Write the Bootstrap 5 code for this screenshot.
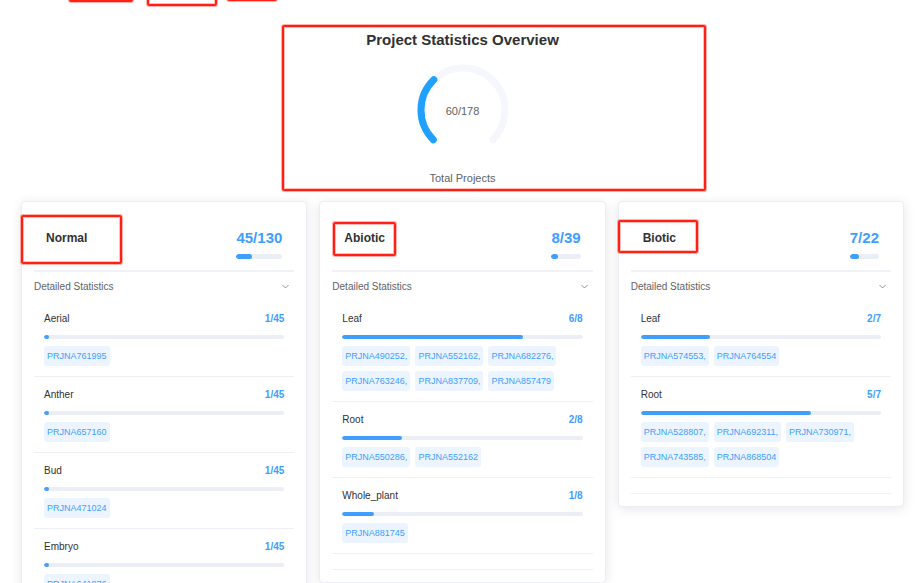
<!DOCTYPE html>
<html lang="en">
<head>
<meta charset="utf-8">
<meta name="viewport" content="width=device-width, initial-scale=1">
<title>Project Statistics Overview</title>
<link href="https://cdn.jsdelivr.net/npm/bootstrap@5.3.0/dist/css/bootstrap.min.css" rel="stylesheet">
<style>
  body { font-family: "Liberation Sans", Arial, sans-serif; font-size: 10px; line-height: 20px; color: #303133; background: #fff; }
  .stats-page { padding: 0 11px 20px 21px; }
  .overview { padding-top: 28px; padding-bottom: 13px; }
  .overview h1 { font-size: 15px; line-height: 24px; color: #303133; }
  .overview-caption, .gauge-value { font-size: 11px; color: #606266; }
  .gauge-value { padding-top: 2px; }
  .gauge { margin-top: 10px; margin-bottom: 10px; }
  .gauge svg { width: 96px; height: 96px; }
  .stats-grid { --bs-gutter-x: 12px; }
  .stat-card { border: 1px solid #ebeef5; border-radius: 4px; box-shadow: 0 2px 12px rgba(0, 0, 0, .1); padding: 0 12px 12px; }
  .stat-head { height: 70px; padding: 4px 12px 0; border-bottom: 2px solid #f0f2f8; }
  .stat-head h2 { font-size: 12px; line-height: 20px; }
  .stat-total { font-size: 15px; color: #409eff; margin-top: 10px; }
  .progress { --bs-progress-height: 4px; --bs-progress-bg: #ebeef5; --bs-progress-bar-bg: #409eff; --bs-progress-border-radius: 4px; }
  .progress-bar { border-radius: 4px; }
  .stat-total-bar { --bs-progress-height: 5px; margin-top: 6px; }
  .detail-toggle { color: #606266; height: 29px; padding: 0 4px 0 0; font-size: 10px; }
  .detail-toggle svg { width: 9px; height: 9px; }
  .tissue { padding: 8px 10px 10px; border-bottom: 1px solid #eef0f5; }
  .tissue h3 { font-size: 10px; line-height: 20px; }
  .tissue-count { color: #409eff; }
  .tissue .progress { margin: 6px 0 7px; }
  .tag-list { gap: 5px; }
  .tag { color: #409eff; background: #ecf5ff; font-size: 9px; border-radius: 3px; padding: 0 3px; }
  .detail-end { height: 16px; border-bottom: 1px solid #eef0f5; }
  .callout { position: absolute; border: 2px solid #ff2014; border-radius: 2px; box-shadow: 0 0 0 1px rgba(255, 32, 20, .35), inset 0 0 0 1px rgba(255, 32, 20, .3); pointer-events: none; }
  .callout-tab-a { left: 69px; top: -6px; width: 64px; height: 8px; background: #ff2014; }
  .callout-tab-b { left: 147px; top: -20px; width: 70px; height: 26px; }
  .callout-tab-c { left: 227px; top: -20px; width: 50px; height: 21px; }
  .callout-overview { left: 261px; top: 25px; width: 424px; height: 166px; }
  .callout-normal { left: -25px; top: -13px; width: 101px; height: 49px; }
  .callout-abiotic { left: -11px; top: -6px; width: 63px; height: 34px; }
  .callout-biotic { left: -25px; top: -8px; width: 80px; height: 33px; }
</style>
<script src="https://cdn.jsdelivr.net/npm/bootstrap@5.3.0/dist/js/bootstrap.bundle.min.js"></script>
</head>
<body>
<div class="callout callout-tab-a"></div>
<div class="callout callout-tab-b"></div>
<div class="callout callout-tab-c"></div>
<main class="stats-page">
  <section class="overview position-relative text-center">
    <h1 class="fw-bold mb-0">Project Statistics Overview</h1>
    <div class="gauge d-grid justify-content-center">
      <div class="position-relative">
        <svg class="d-block" viewBox="0 0 96 96" fill="none" stroke-width="7" stroke-linecap="round" aria-hidden="true">
          <path d="M18.3 77.7A42 42 0 1 1 77.7 77.7" stroke="#f5f7fc"/>
          <path d="M18.3 77.7A42 42 0 0 1 18.8 17.8" stroke="#20a0ff"/>
        </svg>
        <span class="gauge-value position-absolute top-50 start-50 translate-middle">60/178</span>
      </div>
    </div>
    <div class="overview-caption">Total Projects</div>
    <div class="callout callout-overview"></div>
  </section>

  <div class="row row-cols-3 align-items-start stats-grid">
    <div class="col">
      <section class="card stat-card">
        <header class="stat-head d-flex justify-content-between align-items-center">
          <h2 class="fw-bold mb-0 position-relative">Normal<span class="callout callout-normal"></span></h2>
          <div>
            <div class="stat-total fw-bold">45/130</div>
            <div class="progress stat-total-bar"><div class="progress-bar" style="width:35%"></div></div>
          </div>
        </header>
        <button class="btn border-0 detail-toggle d-flex justify-content-between align-items-center" type="button" data-bs-toggle="collapse" data-bs-target="#normal-details" aria-expanded="true" aria-controls="normal-details">Detailed Statistics
          <svg viewBox="0 0 9 9" fill="none" stroke="#909399" aria-hidden="true"><path d="M1.5 3L4.5 6L7.5 3"/></svg></button>
        <div class="collapse show" id="normal-details">
          <div class="tissue">
            <div class="d-flex justify-content-between"><h3 class="fw-normal mb-0">Aerial</h3><span class="tissue-count fw-bold">1/45</span></div>
            <div class="progress"><div class="progress-bar" style="width:2%"></div></div>
            <div class="tag-list d-flex flex-wrap"><span class="tag">PRJNA761995</span></div>
          </div>
          <div class="tissue">
            <div class="d-flex justify-content-between"><h3 class="fw-normal mb-0">Anther</h3><span class="tissue-count fw-bold">1/45</span></div>
            <div class="progress"><div class="progress-bar" style="width:2%"></div></div>
            <div class="tag-list d-flex flex-wrap"><span class="tag">PRJNA657160</span></div>
          </div>
          <div class="tissue">
            <div class="d-flex justify-content-between"><h3 class="fw-normal mb-0">Bud</h3><span class="tissue-count fw-bold">1/45</span></div>
            <div class="progress"><div class="progress-bar" style="width:2%"></div></div>
            <div class="tag-list d-flex flex-wrap"><span class="tag">PRJNA471024</span></div>
          </div>
          <div class="tissue">
            <div class="d-flex justify-content-between"><h3 class="fw-normal mb-0">Embryo</h3><span class="tissue-count fw-bold">1/45</span></div>
            <div class="progress"><div class="progress-bar" style="width:2%"></div></div>
            <div class="tag-list d-flex flex-wrap"><span class="tag">PRJNA641876</span></div>
          </div>
          <div class="detail-end"></div>
        </div>
      </section>
    </div>

    <div class="col">
      <section class="card stat-card">
        <header class="stat-head d-flex justify-content-between align-items-center">
          <h2 class="fw-bold mb-0 position-relative">Abiotic<span class="callout callout-abiotic"></span></h2>
          <div>
            <div class="stat-total fw-bold">8/39</div>
            <div class="progress stat-total-bar"><div class="progress-bar" style="width:21%"></div></div>
          </div>
        </header>
        <button class="btn border-0 detail-toggle d-flex justify-content-between align-items-center" type="button" data-bs-toggle="collapse" data-bs-target="#abiotic-details" aria-expanded="true" aria-controls="abiotic-details">Detailed Statistics
          <svg viewBox="0 0 9 9" fill="none" stroke="#909399" aria-hidden="true"><path d="M1.5 3L4.5 6L7.5 3"/></svg></button>
        <div class="collapse show" id="abiotic-details">
          <div class="tissue">
            <div class="d-flex justify-content-between"><h3 class="fw-normal mb-0">Leaf</h3><span class="tissue-count fw-bold">6/8</span></div>
            <div class="progress"><div class="progress-bar" style="width:75%"></div></div>
            <div class="tag-list d-flex flex-wrap"><span class="tag">PRJNA490252,</span><span class="tag">PRJNA552162,</span><span class="tag">PRJNA682276,</span><span class="tag">PRJNA763246,</span><span class="tag">PRJNA837709,</span><span class="tag">PRJNA857479</span></div>
          </div>
          <div class="tissue">
            <div class="d-flex justify-content-between"><h3 class="fw-normal mb-0">Root</h3><span class="tissue-count fw-bold">2/8</span></div>
            <div class="progress"><div class="progress-bar" style="width:25%"></div></div>
            <div class="tag-list d-flex flex-wrap"><span class="tag">PRJNA550286,</span><span class="tag">PRJNA552162</span></div>
          </div>
          <div class="tissue">
            <div class="d-flex justify-content-between"><h3 class="fw-normal mb-0">Whole_plant</h3><span class="tissue-count fw-bold">1/8</span></div>
            <div class="progress"><div class="progress-bar" style="width:13%"></div></div>
            <div class="tag-list d-flex flex-wrap"><span class="tag">PRJNA881745</span></div>
          </div>
          <div class="detail-end"></div>
        </div>
      </section>
    </div>

    <div class="col">
      <section class="card stat-card">
        <header class="stat-head d-flex justify-content-between align-items-center">
          <h2 class="fw-bold mb-0 position-relative">Biotic<span class="callout callout-biotic"></span></h2>
          <div>
            <div class="stat-total fw-bold">7/22</div>
            <div class="progress stat-total-bar"><div class="progress-bar" style="width:32%"></div></div>
          </div>
        </header>
        <button class="btn border-0 detail-toggle d-flex justify-content-between align-items-center" type="button" data-bs-toggle="collapse" data-bs-target="#biotic-details" aria-expanded="true" aria-controls="biotic-details">Detailed Statistics
          <svg viewBox="0 0 9 9" fill="none" stroke="#909399" aria-hidden="true"><path d="M1.5 3L4.5 6L7.5 3"/></svg></button>
        <div class="collapse show" id="biotic-details">
          <div class="tissue">
            <div class="d-flex justify-content-between"><h3 class="fw-normal mb-0">Leaf</h3><span class="tissue-count fw-bold">2/7</span></div>
            <div class="progress"><div class="progress-bar" style="width:29%"></div></div>
            <div class="tag-list d-flex flex-wrap"><span class="tag">PRJNA574553,</span><span class="tag">PRJNA764554</span></div>
          </div>
          <div class="tissue">
            <div class="d-flex justify-content-between"><h3 class="fw-normal mb-0">Root</h3><span class="tissue-count fw-bold">5/7</span></div>
            <div class="progress"><div class="progress-bar" style="width:71%"></div></div>
            <div class="tag-list d-flex flex-wrap"><span class="tag">PRJNA528807,</span><span class="tag">PRJNA692311,</span><span class="tag">PRJNA730971,</span><span class="tag">PRJNA743585,</span><span class="tag">PRJNA868504</span></div>
          </div>
          <div class="detail-end"></div>
        </div>
      </section>
    </div>
  </div>
</main>
</body>
</html>
